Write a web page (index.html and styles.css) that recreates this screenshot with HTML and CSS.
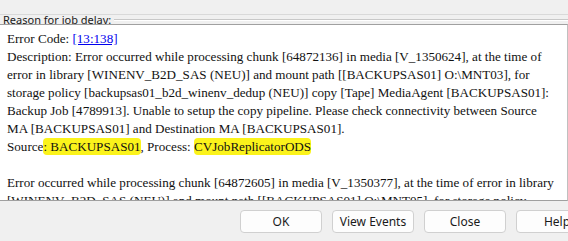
FILE: index.html
```html
<!DOCTYPE html>
<html>
    <head>
        <title>Job Details</title>
        <link rel="stylesheet" href="styles.css">
    </head>
    <body>
        <div class="dialog">
            <div class="topStrip"></div>

            <div class="groupHead">
                <span class="groupLabel">Reason for job delay:</span>
                <span class="groupRule"></span>
            </div>

            <div class="reasonBox">
                <div class="line">Error Code: <a href="#" class="code">[13:138]</a></div>
                <div class="line">Description: Error occurred while processing chunk [64872136] in media [V_1350624], at the time of</div>
                <div class="line">error in library [WINENV_B2D_SAS (NEU)] and mount path [[BACKUPSAS01] O:\MNT03], for</div>
                <div class="line">storage policy [backupsas01_b2d_winenv_dedup (NEU)] copy [Tape] MediaAgent [BACKUPSAS01]:</div>
                <div class="line">Backup Job [4789913]. Unable to setup the copy pipeline. Please check connectivity between Source</div>
                <div class="line">MA [BACKUPSAS01] and Destination MA [BACKUPSAS01].</div>
                <div class="line">Source<span class="mark">: BACKUPSAS01</span>, Process: <span class="mark">CVJobReplicatorODS</span></div>
                <div class="line">&nbsp;</div>
                <div class="line">Error occurred while processing chunk [64872605] in media [V_1350377], at the time of error in library</div>
                <div class="line">[WINENV_B2D_SAS (NEU)] and mount path [[BACKUPSAS01] O:\MNT05], for storage policy</div>
            </div>

            <div class="buttonRow">
                <button class="btn">OK</button>
                <button class="btn">View Events</button>
                <button class="btn">Close</button>
                <button class="btn">Help</button>
            </div>
        </div>
    </body>
</html>
```

FILE: styles.css
```css
*{
    margin: 0;
    padding: 0;
    box-sizing: border-box;
}

body{
    width: 568px;
    height: 241px;
    overflow: hidden;
    background-color: #f0f0f0;
    font-family: "Noto Sans", "Liberation Sans", sans-serif;
}

.dialog{
    display: flex;
    flex-direction: column;
    height: 241px;
}

.topStrip{
    flex-shrink: 0;
    height: 15px;
    border-bottom: 1px solid #d9d9d9;
    background-color: #f0f0f0;
}

.groupHead{
    flex-shrink: 0;
    display: flex;
    align-items: center;
    height: 9px;
    padding-left: 3px;
}

.groupLabel{
    font-size: 11px;
    color: #1a1a1a;
    white-space: nowrap;
}

.groupRule{
    flex: 1;
    height: 2px;
    margin-left: 3px;
    border-top: 1px solid #c8c8c8;
    border-bottom: 1px solid #ffffff;
}

.reasonBox{
    flex-shrink: 0;
    height: 177px;
    overflow: hidden;
    background-color: #ffffff;
    border-top: 1px solid #a0a0a0;
    border-right: 1px solid #c0c0c0;
    border-bottom: 1px solid #a0a0a0;
    padding: 5px 0 0 7px;
    font-family: "Liberation Serif", "Times New Roman", serif;
    font-size: 13.1px;
    line-height: 18px;
    color: #111111;
}

.line{
    white-space: nowrap;
}

.code{
    color: #0000ee;
}

.mark{
    background-color: #fbf31b;
    border-radius: 4px;
    padding: 1px 0;
}

.buttonRow{
    flex: 1;
    display: flex;
    justify-content: flex-end;
    align-items: center;
    gap: 10px;
    margin-right: -30px;
}

.btn{
    width: 82px;
    height: 23px;
    font-family: "Noto Sans", "Liberation Sans", sans-serif;
    font-size: 12px;
    color: #1a1a1a;
    background-color: #fdfdfd;
    border: 1px solid #d0d0d0;
    border-radius: 4px;
}
```
